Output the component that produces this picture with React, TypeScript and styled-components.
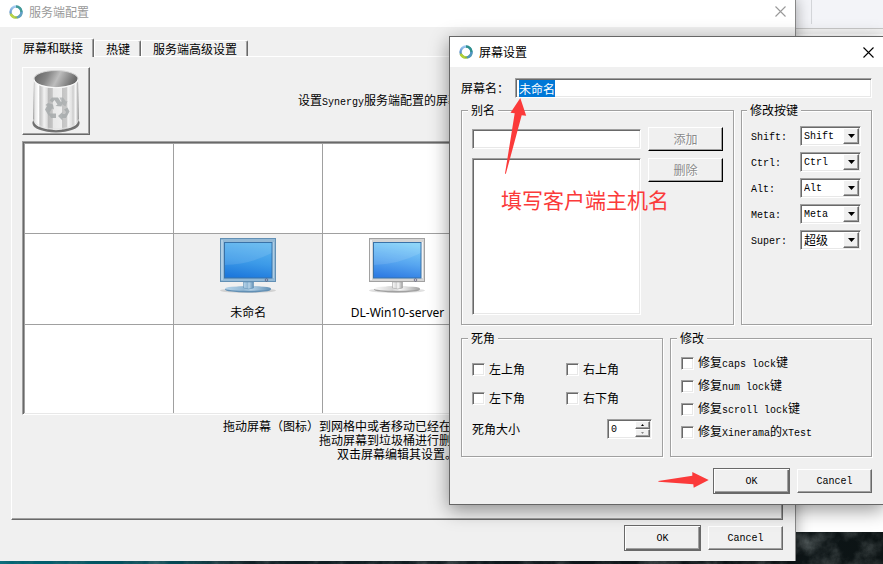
import React, { useEffect, useRef } from "react";
import styled, { createGlobalStyle, css } from "styled-components";

const cjk = `"Noto Sans CJK SC", sans-serif`;
const mono = `"Liberation Mono", "Noto Sans CJK SC", monospace`;

const GlobalStyle = createGlobalStyle`
  * { box-sizing: border-box; }
  html, body, #root { height: 100%; }
  body { margin: 0; overflow: hidden; font: 12px/14px ${cjk}; color: #000; }
  button, input, select { font: inherit; color: inherit; margin: 0; border-radius: 0; outline: none; }
`;

const sunken = css`
  border: 1px solid;
  border-color: #a0a0a0 #fff #fff #a0a0a0;
  box-shadow: inset 1px 1px 0 #696969, inset -1px -1px 0 #e8e8e8;
  background: #fff;
`;
const raised = css`
  border: 1px solid;
  border-color: #fff #696969 #696969 #fff;
  box-shadow: inset -1px -1px 0 #a0a0a0;
  background: #f0f0f0;
`;

const Desktop = styled.main`
  position: relative;
  height: 100%;
  overflow: hidden;
  display: flex;
  flex-direction: column;
  background: #fff;
`;
const BackToolbar = styled.div`
  height: 29px;
  flex: none;
  display: flex;
  justify-content: flex-end;
  background: #f3f4f8;
  border-bottom: 1px solid #c8c8c8;
`;
const BackTab = styled.div`
  width: 72px;
  height: 24px;
  border-left: 1px solid #d4d6da;
`;
const BackPage = styled.div`
  flex: 1;
  border-top: 5px solid #f4f4f4;
  background: #fff;
`;
const Wallpaper = styled.div`
  height: 32px;
  background: linear-gradient(90deg, #00788a, #065462 20%, #14272d 28%, #10191d 70%, #0c1314);
`;
const Rock = styled.svg`
  display: block;
  width: 100%;
  height: 100%;
`;

const Win = styled.section`
  position: absolute;
  display: flex;
  flex-direction: column;
  background: #f0f0f0;
`;
const MainWindow = styled(Win)`
  top: 0;
  left: 0;
  right: 87px;
  bottom: 3px;
  border-right: 1px solid #888;
  box-shadow: 0 0 14px rgba(0, 0, 0, 0.35);
`;
const DialogWindow = styled(Win)`
  top: 36px;
  left: 449px;
  right: -1px;
  border: 1px solid #666;
  box-shadow: 0 5px 18px rgba(0, 0, 0, 0.42);
`;
const TitleBar = styled.header<{ $size: number; $dim?: boolean }>`
  display: flex;
  align-items: center;
  gap: 5px;
  height: ${(p) => p.$size}px;
  flex: none;
  padding: 0 7px ${(p) => (p.$dim ? 4 : 0)}px 8px;
  background: #fff;
  color: ${(p) => (p.$dim ? "#999" : "#000")};
`;
const Title = styled.h1`
  flex: 1;
  margin: 0;
  font: inherit;
`;
const CloseButton = styled.button`
  display: flex;
  padding: 2px;
  border: 0;
  background: none;
`;

const MainBody = styled.div`
  flex: 1;
  display: flex;
  flex-direction: column;
  padding: 11px 12px 10px 11px;
`;
const Tabs = styled.div`
  display: flex;
  align-items: flex-end;
  height: 18px;
`;
const Tab = styled.button<{ $active?: boolean }>`
  height: ${(p) => (p.$active ? 19 : 16)}px;
  margin-bottom: ${(p) => (p.$active ? -1 : 0)}px;
  padding: ${(p) => (p.$active ? 2 : 0)}px 10px 0 11px;
  display: flex;
  align-items: ${(p) => (p.$active ? "flex-start" : "center")};
  border: 1px solid #fff;
  border-right: 1px solid #696969;
  border-bottom: 0;
  border-top-left-radius: 2px;
  border-top-right-radius: 2px;
  box-shadow: inset -1px 0 0 #a0a0a0;
  background: #f0f0f0;
  z-index: ${(p) => (p.$active ? 1 : 0)};
`;
const TabPanel = styled.div`
  ${raised}
  flex: 1;
  padding: 10px;
`;
const PanelHead = styled.div`
  display: grid;
  grid-template-columns: 68px 1fr 68px;
  align-items: center;
  text-align: center;
`;
const TrashBox = styled.div`
  ${raised}
  height: 68px;
`;
const ScreenGrid = styled.div`
  ${sunken}
  margin: 6px 0 4px;
  padding: 2px 1px 1px 2px;
  display: grid;
  grid-template-columns: repeat(5, 1fr);
  grid-template-rows: 89px 90px 88px;
  gap: 1px;
  background: #a0a0a0;
`;
const Cell = styled.div<{ $selected?: boolean }>`
  display: flex;
  flex-direction: column;
  align-items: center;
  min-width: 0;
  padding-top: 4px;
  gap: 12px;
  background: ${(p) => (p.$selected ? "#f0f0f0" : "#fff")};
  font-family: "Noto Sans", ${cjk};
  white-space: nowrap;
`;
const Hint = styled.p`
  margin: 0;
  text-align: center;
`;
const Latin = styled.span`
  font: 10px/12px ${mono};
`;

const Buttons = styled.footer`
  display: flex;
  justify-content: flex-end;
  align-items: center;
  gap: 7px;
  margin-top: 5px;
`;
const PushButton = styled.button<{ $default?: boolean }>`
  ${raised}
  width: ${(p) => (p.$default ? 77 : 75)}px;
  height: ${(p) => (p.$default ? 26 : 24)}px;
  padding: 1px 0 0;
  font: 10px/12px ${mono};
  ${(p) =>
    p.$default &&
    css`
      border-color: #696969;
      box-shadow: inset 1px 1px 0 #fff, inset -1px -1px 0 #696969, inset -2px -2px 0 #a0a0a0;
    `}
`;
const AliasButton = styled.button`
  ${raised}
  height: 24px;
  padding: 0;
  border-right-color: #000;
  border-bottom-color: #000;
  color: #8a8a8a;
  text-shadow: 1px 1px 0 #fff;
`;

const DialogBody = styled.div`
  display: flex;
  flex-direction: column;
  padding: 11px 11px 10px;
`;
const NameRow = styled.div`
  display: flex;
  align-items: center;
  gap: 6px;
  margin-bottom: 5px;
`;
const NameLabel = styled.label`
  width: 48px;
  white-space: nowrap;
`;
const TextBox = styled.input`
  ${sunken}
  flex: 1;
  min-width: 0;
  width: 100%;
  height: 20px;
  padding: 0 3px;
  &::selection { background: #0078d7; color: #fff; }
`;
const Groups = styled.div<{ $cols: string }>`
  display: grid;
  grid-template-columns: ${(p) => p.$cols};
  gap: 7px;
  margin-bottom: 6px;
`;
const Group = styled.fieldset`
  min-width: 0;
  margin: 0;
  padding: 10px 10px 9px;
  border: 1px solid #a0a0a0;
  box-shadow: 1px 1px 0 #fff, inset 1px 1px 0 #fff;
`;
const ModGroup = styled(Group)`
  padding: 9px;
`;
const LowerGroup = styled(Group)`
  padding-top: 9px;
  padding-bottom: 17px;
`;
const Legend = styled.legend`
  margin-left: -4px;
  padding: 0 3px;
  background: #f0f0f0;
`;
const AliasGrid = styled.div`
  display: grid;
  grid-template-columns: 1fr 75px;
  grid-template-rows: 24px 157px;
  gap: 7px;
  align-items: center;
`;
const AliasList = styled.div`
  ${sunken}
  height: 100%;
`;
const TopAlign = styled.div`
  align-self: start;
  display: grid;
`;
const ModRow = styled.div`
  display: grid;
  grid-template-columns: 49px 61px;
  align-items: center;
  height: 20px;
  margin-bottom: 6px;
`;
const ModLabel = styled.label`
  padding-top: 3px;
  font: 10px/12px ${mono};
`;
const SelectBox = styled.div`
  ${sunken}
  display: flex;
  position: relative;
  height: 20px;
  padding: 1px;
`;
const Select = styled.select<{ $wide?: boolean }>`
  appearance: none;
  width: 100%;
  padding: ${(p) => (p.$wide ? 0 : 2)}px 2px 0;
  border: 0;
  background: transparent;
  font: ${(p) => (p.$wide ? `12px/14px ${cjk}` : `10px/12px ${mono}`)};
`;
const DropMark = styled.span`
  ${raised}
  position: absolute;
  inset: 1px 1px 1px auto;
  width: 16px;
  display: flex;
  align-items: center;
  justify-content: center;
  pointer-events: none;
`;

const Corners = styled.div`
  display: grid;
  grid-template-columns: 94px 1fr;
  row-gap: 15px;
  padding-top: 8px;
`;
const Fixes = styled.div`
  display: grid;
  row-gap: 9px;
  padding-top: 2px;
`;
const CheckLabel = styled.label`
  display: flex;
  align-items: center;
  gap: 4px;
  height: 14px;
  white-space: nowrap;
`;
const Check = styled.input`
  ${sunken}
  appearance: none;
  width: 13px;
  height: 13px;
`;
const SizeRow = styled.div`
  display: flex;
  justify-content: space-between;
  align-items: center;
  margin-top: 14px;
`;
const Spin = styled.div`
  ${sunken}
  display: flex;
  width: 45px;
  height: 20px;
  padding: 1px;
`;
const SpinInput = styled.input`
  width: 27px;
  min-width: 0;
  padding: 2px 2px 0;
  border: 0;
  background: transparent;
  font: 10px/12px ${mono};
`;
const SpinButtons = styled.div`
  display: grid;
  grid-template-rows: 1fr 1fr;
  width: 16px;
`;
const SpinButton = styled.button`
  ${raised}
  display: flex;
  align-items: center;
  justify-content: center;
  min-height: 0;
  padding: 0;
`;

const Note = styled.p`
  position: absolute;
  top: 148px;
  left: 51px;
  margin: 0;
  font: 21px/28px ${cjk};
  color: #fb3a3a;
`;
const Pointer = styled.svg<{ $x: number; $y: number }>`
  position: absolute;
  left: ${(p) => p.$x}px;
  top: ${(p) => p.$y}px;
  fill: #fb3a3a;
  pointer-events: none;
`;

function Ring({ id, faded }: { id: string; faded?: boolean }) {
  return (
    <svg width="16" height="16" viewBox="0 0 16 16" opacity={faded ? 0.9 : 1}>
      <defs>
        <linearGradient id={id} x1="0" y1="0" x2="0" y2="1">
          <stop offset="0" stopColor="#9cc7f0" />
          <stop offset=".5" stopColor="#5d90cf" />
          <stop offset="1" stopColor="#8dbb3a" />
        </linearGradient>
      </defs>
      <circle cx="8" cy="8" r="5.5" fill="none" stroke={`url(#${id})`} strokeWidth="2.4" />
      <path d="M8 2.5A5.5 5.5 0 0 1 13.5 8" fill="none" stroke="#2f918c" strokeWidth="2.4" />
      <path d="M13.5 8A5.5 5.5 0 0 1 9 13.4" fill="none" stroke="#4f96c0" strokeWidth="2.4" />
      <path d="M7 13.4A5.5 5.5 0 0 1 2.8 10" fill="none" stroke="#b3d233" strokeWidth="2.4" />
    </svg>
  );
}

function CloseIcon({ color }: { color: string }) {
  return (
    <svg width="11" height="11" viewBox="0 0 11 11">
      <path d="M.5 .5L10.5 10.5M10.5 .5L.5 10.5" stroke={color} strokeWidth="1.1" />
    </svg>
  );
}

function Trash() {
  return (
    <svg width="66" height="66" viewBox="0 0 66 66">
      <defs>
        <linearGradient id="can" x1="0" x2="1" y1="0" y2="0">
          <stop offset="0" stopColor="#8c8c8c" />
          <stop offset=".04" stopColor="#e4e4e4" />
          <stop offset=".12" stopColor="#fff" />
          <stop offset=".15" stopColor="#c4c4c4" />
          <stop offset=".2" stopColor="#d8d8d8" />
          <stop offset=".24" stopColor="#f2f2f2" />
          <stop offset=".31" stopColor="#dedede" />
          <stop offset=".33" stopColor="#b9b9b9" />
          <stop offset=".42" stopColor="#c4c4c4" />
          <stop offset=".44" stopColor="#e8e8e8" />
          <stop offset=".62" stopColor="#eee" />
          <stop offset=".64" stopColor="#c4c4c4" />
          <stop offset=".73" stopColor="#cacaca" />
          <stop offset=".76" stopColor="#f4f4f4" />
          <stop offset=".84" stopColor="#e2e2e2" />
          <stop offset=".87" stopColor="#cdcdcd" />
          <stop offset=".93" stopColor="#fafafa" />
          <stop offset="1" stopColor="#888" />
        </linearGradient>
        <linearGradient id="mouth" x1="0" x2="1" y1="0" y2=".2">
          <stop offset="0" stopColor="#5c5c5c" />
          <stop offset=".35" stopColor="#858585" />
          <stop offset=".6" stopColor="#bdbdbd" />
          <stop offset="1" stopColor="#6a6a6a" />
        </linearGradient>
      </defs>
      <ellipse cx="33" cy="55.5" rx="23.5" ry="9" fill="#777" />
      <path d="M11 11L10 54C13 66 53 66 56 54L55 11Z" fill="url(#can)" />
      <path d="M10 53.5C13 66 53 66 56 53.5" fill="none" stroke="#6d6d6d" strokeWidth="1.4" />
      <path d="M10.5 51.5C14 64 52 64 55.5 51.5" fill="none" stroke="#e2e2e2" strokeWidth=".8" />
      <ellipse cx="33" cy="11" rx="22" ry="8.5" fill="url(#mouth)" stroke="#d4d4d4" strokeWidth="1" />
      <path d="M11 11.500C13 22.500 53 22.500 55 11.500" fill="none" stroke="#fafafa" strokeWidth="1.200" />
      <g fill="#a9adae" opacity=".9">
        <path d="M29 29.500h6l3 4.500 2-1-1.500 5.500-6-.5 2-1.500-3-4.500-2 2.500-3-2z" />
        <path d="M36.500 29.500h3.500l3 4 1.500-.5-2 5.500-3-2z" opacity=".8" />
        <path d="M25 35l5 1.500 1 5-2-1-2.500 4 1 3h-2l-3.500-6 2-3.500-1.500-1z" />
        <path d="M41 41.500l3.500-2 2 4-3.500 6.500h-3.500v2.500l-4.500-4.500 4.500-4v2h2.500l1-2z" />
        <path d="M25.500 45.500h7.500v4.500h-5z" />
      </g>
    </svg>
  );
}

function Monitor({ id, blue }: { id: string; blue?: boolean }) {
  const edge = blue ? "#6290b5" : "#a1a1a1";
  const face = blue ? "#93b9d6" : "#d5d5d5";
  const light = blue ? "#b7d4e9" : "#fafafa";
  return (
    <svg width="58" height="56" viewBox="0 0 58 56">
      <defs>
        <linearGradient id={id} x1=".6" y1="0" x2=".4" y2="1">
          <stop offset="0" stopColor={blue ? "#5cb5ef" : "#82d1f8"} />
          <stop offset=".55" stopColor={blue ? "#3c9ae8" : "#57a6f0"} />
          <stop offset="1" stopColor={blue ? "#1d78dc" : "#2f7ce3"} />
        </linearGradient>
        <linearGradient id={id + "foot"} x1="0" x2="1" y1="0" y2="0">
          <stop offset="0" stopColor={light} />
          <stop offset=".4" stopColor={face} />
          <stop offset=".55" stopColor={light} />
          <stop offset="1" stopColor={edge} />
        </linearGradient>
      </defs>
      <ellipse cx="29" cy="52.500" rx="28" ry="2.500" fill="#000" opacity=".12" />
      <ellipse cx="29" cy="51.500" rx="23" ry="3" fill={edge} />
      <ellipse cx="29" cy="50.500" rx="23" ry="2.300" fill={`url(#${id}foot)`} />
      <path d="M24.500 44h10v6q-5 2-10 0z" fill={`url(#${id}foot)`} stroke={edge} strokeWidth=".6" />
      <rect x="1.500" y=".5" width="55" height="43" fill={face} stroke={edge} />
      <path d="M3 2v40M54 4v36" stroke={light} strokeWidth="1.600" />
      <rect x="5.500" y="4.500" width="47.500" height="35.500" fill={`url(#${id})`} stroke="#3972a8" />
      <path d="M6 27Q32 26 52.500 15V5H6Z" fill="#fff" opacity=".1" />
      <circle cx="47.500" cy="42" r="1.300" fill="none" stroke="#557" strokeWidth=".7" />
    </svg>
  );
}

function Triangle({ up, color = "#000", size = 7 }: { up?: boolean; color?: string; size?: number }) {
  const h = Math.ceil(size / 2);
  return (
    <svg width={size} height={h} viewBox={`0 0 ${size} ${h}`}>
      <path d={up ? `M0 ${h}h${size}L${size / 2} 0z` : `M0 0h${size}L${size / 2} ${h}z`} fill={color} />
    </svg>
  );
}

const modifiers = [
  { label: "Shift:", value: "Shift" },
  { label: "Ctrl:", value: "Ctrl" },
  { label: "Alt:", value: "Alt" },
  { label: "Meta:", value: "Meta" },
  { label: "Super:", value: "超级" },
];
const corners = ["左上角", "右上角", "左下角", "右下角"];
const cells = Array.from({ length: 15 }, (_, i) => i);

function ServerConfig() {
  return (
    <MainWindow aria-label="服务端配置">
      <TitleBar $size={27} $dim>
        <Ring id="ring-main" faded />
        <Title>服务端配置</Title>
        <CloseButton aria-label="关闭"><CloseIcon color="#999" /></CloseButton>
      </TitleBar>
      <MainBody>
        <Tabs role="tablist">
          <Tab role="tab" aria-selected $active>屏幕和联接</Tab>
          <Tab role="tab">热键</Tab>
          <Tab role="tab">服务端高级设置</Tab>
        </Tabs>
        <TabPanel role="tabpanel">
          <PanelHead>
            <TrashBox><Trash /></TrashBox>
            <Hint>设置<Latin>Synergy</Latin>服务端配置的屏幕布局。</Hint>
          </PanelHead>
          <ScreenGrid>
            {cells.map((i) => (
              <Cell key={i} $selected={i === 6}>
                {i === 6 && <><Monitor id="mon-a" blue /><span>未命名</span></>}
                {i === 7 && <><Monitor id="mon-b" /><span>DL-Win10-server</span></>}
              </Cell>
            ))}
          </ScreenGrid>
          <Hint>拖动屏幕（图标）到网格中或者移动已经在网格中的屏幕到新位置</Hint>
          <Hint>拖动屏幕到垃圾桶进行删除。</Hint>
          <Hint>双击屏幕编辑其设置。</Hint>
        </TabPanel>
        <Buttons>
          <PushButton $default>OK</PushButton>
          <PushButton>Cancel</PushButton>
        </Buttons>
      </MainBody>
    </MainWindow>
  );
}

function ScreenSettings() {
  const nameRef = useRef<HTMLInputElement>(null);
  useEffect(() => {
    nameRef.current?.focus();
    nameRef.current?.select();
  }, []);
  return (
    <DialogWindow role="dialog" aria-label="屏幕设置">
      <TitleBar $size={30}>
        <Ring id="ring-dialog" />
        <Title>屏幕设置</Title>
        <CloseButton aria-label="关闭"><CloseIcon color="#000" /></CloseButton>
      </TitleBar>
      <DialogBody>
        <NameRow>
          <NameLabel htmlFor="screen-name">屏幕名：</NameLabel>
          <TextBox id="screen-name" ref={nameRef} defaultValue="未命名" />
        </NameRow>
        <Groups $cols="1fr 131px">
          <Group>
            <Legend>别名</Legend>
            <AliasGrid>
              <TextBox aria-label="别名" />
              <AliasButton disabled>添加</AliasButton>
              <AliasList role="listbox" aria-label="别名" />
              <TopAlign><AliasButton disabled>删除</AliasButton></TopAlign>
            </AliasGrid>
          </Group>
          <ModGroup>
            <Legend>修改按键</Legend>
            {modifiers.map((m) => (
              <ModRow key={m.label}>
                <ModLabel htmlFor={m.label}>{m.label}</ModLabel>
                <SelectBox>
                  <Select id={m.label} $wide={m.value === "超级"} defaultValue={m.value}>
                    <option>{m.value}</option>
                  </Select>
                  <DropMark><Triangle /></DropMark>
                </SelectBox>
              </ModRow>
            ))}
          </ModGroup>
        </Groups>
        <Groups $cols="1fr 1fr">
          <LowerGroup>
            <Legend>死角</Legend>
            <Corners>
              {corners.map((c) => (
                <CheckLabel key={c}><Check type="checkbox" />{c}</CheckLabel>
              ))}
            </Corners>
            <SizeRow>
              <label htmlFor="corner-size">死角大小</label>
              <Spin>
                <SpinInput id="corner-size" defaultValue="0" />
                <SpinButtons>
                  <SpinButton aria-label="增加"><Triangle up size={3} /></SpinButton>
                  <SpinButton aria-label="减少"><Triangle color="#888" size={3} /></SpinButton>
                </SpinButtons>
              </Spin>
            </SizeRow>
          </LowerGroup>
          <LowerGroup>
            <Legend>修改</Legend>
            <Fixes>
              <CheckLabel><Check type="checkbox" /><span>修复<Latin>caps lock</Latin>键</span></CheckLabel>
              <CheckLabel><Check type="checkbox" /><span>修复<Latin>num lock</Latin>键</span></CheckLabel>
              <CheckLabel><Check type="checkbox" /><span>修复<Latin>scroll lock</Latin>键</span></CheckLabel>
              <CheckLabel><Check type="checkbox" /><span>修复<Latin>Xinerama</Latin>的<Latin>XTest</Latin></span></CheckLabel>
            </Fixes>
          </LowerGroup>
        </Groups>
        <Buttons>
          <PushButton $default>OK</PushButton>
          <PushButton>Cancel</PushButton>
        </Buttons>
      </DialogBody>
      <Note>填写客户端主机名</Note>
      <Pointer $x={50} $y={60} width="32" height="80" viewBox="500 97 32 80">
        <path d="M520.300 98L526.200 115.700L521.700 115.300L505.800 174L505 173.500L514.700 113.300L510.500 112.700Z" />
      </Pointer>
      <Pointer $x={206} $y={433} width="56" height="20" viewBox="656 470 56 20">
        <path d="M708.700 480L692.300 472V475.700L658.300 481L658.500 481.800L693.300 484.300L693.700 487.800Z" />
      </Pointer>
    </DialogWindow>
  );
}

export default function App() {
  return (
    <Desktop>
      <GlobalStyle />
      <BackToolbar><BackTab /></BackToolbar>
      <BackPage />
      <Wallpaper>
        <Rock>
          <filter id="rock">
            <feTurbulence type="fractalNoise" baseFrequency=".05" numOctaves="5" seed="8" />
            <feColorMatrix values=".4 0 0 0 0  .45 0 0 0 0  .45 0 0 0 0  1.600 0 0 0 -.6" />
          </filter>
          <rect width="100%" height="100%" filter="url(#rock)" opacity=".5" />
        </Rock>
      </Wallpaper>
      <ServerConfig />
      <ScreenSettings />
    </Desktop>
  );
}
